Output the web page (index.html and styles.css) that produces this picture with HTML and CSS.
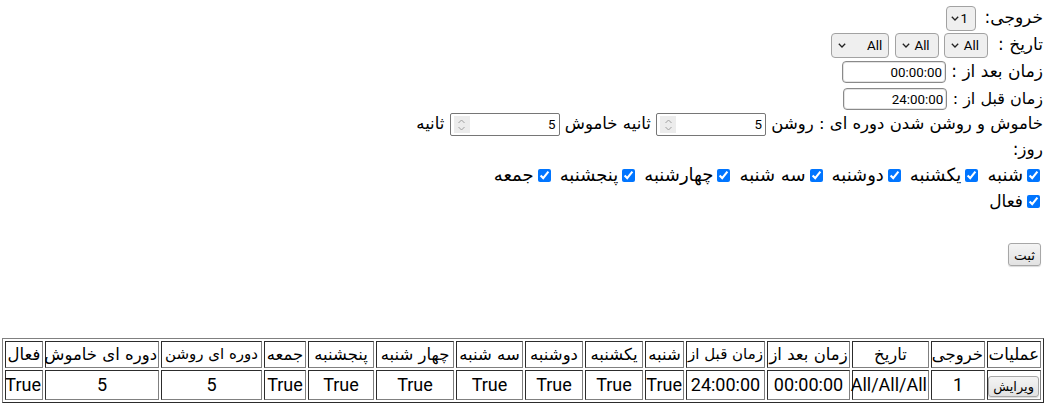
FILE: index.html
```html
<!DOCTYPE html>
<html dir="rtl" lang="fa">
<head>
<meta charset="utf-8">
<link rel="stylesheet" href="styles.css">
</head>
<body>
<div class="page">
<form class="form">
  <div class="row tall">خروجی: <span class="sel-wrap one"><select class="sel sel-1"><option>1</option></select><svg class="chev" width="8" height="5" viewBox="0 0 8 5"><path d="M0.8 0.8 L4 4 L7.2 0.8" fill="none" stroke="#222" stroke-width="1.3"/></svg></span></div>
  <div class="row tall">تاریخ :<span class="sel-wrap first"><select class="sel sel-2"><option>All</option></select><svg class="chev" width="8" height="5" viewBox="0 0 8 5"><path d="M0.8 0.8 L4 4 L7.2 0.8" fill="none" stroke="#222" stroke-width="1.3"/></svg></span> <span class="sel-wrap"><select class="sel sel-2"><option>All</option></select><svg class="chev" width="8" height="5" viewBox="0 0 8 5"><path d="M0.8 0.8 L4 4 L7.2 0.8" fill="none" stroke="#222" stroke-width="1.3"/></svg></span> <span class="sel-wrap"><select class="sel sel-3"><option>All</option></select><svg class="chev" width="8" height="5" viewBox="0 0 8 5"><path d="M0.8 0.8 L4 4 L7.2 0.8" fill="none" stroke="#222" stroke-width="1.3"/></svg></span></div>
  <div class="row tall">زمان بعد از : <input class="txt" type="text" value="00:00:00"></div>
  <div class="row"><span class="lbl-narrow">زمان قبل از :</span> <input class="txt" type="text" value="24:00:00"></div>
  <div class="row short period">خاموش و روشن شدن دوره ای : روشن <span class="num-wrap"><input class="num" type="text" value="5"><span class="spin"><svg width="9" height="14" viewBox="0 0 9 14"><path d="M1.5 5 L4.5 2 L7.5 5" fill="none" stroke="#a0a0a0" stroke-width="1"/><path d="M1.5 9 L4.5 12 L7.5 9" fill="none" stroke="#a0a0a0" stroke-width="1"/></svg></span></span> ثانیه خاموش <span class="num-wrap"><input class="num" type="text" value="5"><span class="spin"><svg width="9" height="14" viewBox="0 0 9 14"><path d="M1.5 5 L4.5 2 L7.5 5" fill="none" stroke="#a0a0a0" stroke-width="1"/><path d="M1.5 9 L4.5 12 L7.5 9" fill="none" stroke="#a0a0a0" stroke-width="1"/></svg></span></span> ثانیه</div>
  <div class="row">روز:</div>
  <div class="row days"><label><input class="chk" type="checkbox" checked>شنبه</label><label><input class="chk" type="checkbox" checked>یکشنبه</label><label><input class="chk" type="checkbox" checked>دوشنبه</label><label><input class="chk" type="checkbox" checked>سه شنبه</label><label><input class="chk" type="checkbox" checked>چهارشنبه</label><label><input class="chk" type="checkbox" checked>پنجشنبه</label><label><input class="chk" type="checkbox" checked>جمعه</label></div>
  <div class="row"><label><input class="chk" type="checkbox" checked>فعال</label></div>
  <div class="submit-row"><button type="button" class="btn">ثبت</button></div>
</form>
<table class="grid" border="1">
  <tr class="head">
    <td class="c1">عملیات</td><td class="c2">خروجی</td><td class="c3">تاریخ</td><td class="c4">زمان بعد از</td><td class="c5 fit">زمان قبل از</td><td class="c6">شنبه</td><td class="c7">یکشنبه</td><td class="c8">دوشنبه</td><td class="c9">سه شنبه</td><td class="c10">چهار شنبه</td><td class="c11">پنجشنبه</td><td class="c12">جمعه</td><td class="c13 fit">دوره ای روشن</td><td class="c14">دوره ای خاموش</td><td class="c15">فعال</td>
  </tr>
  <tr class="data">
    <td><button type="button" class="btn btn-sm">ویرایش</button></td><td>1</td><td>All/All/All</td><td>00:00:00</td><td>24:00:00</td><td>True</td><td>True</td><td>True</td><td>True</td><td>True</td><td>True</td><td>True</td><td>5</td><td>5</td><td>True</td>
  </tr>
</table>
</div>
</body>
</html>
```
FILE: styles.css
```css
body {
  margin: 0;
  font-family: "DejaVu Sans", sans-serif;
  font-size: 17px;
  color: #000;
  background: #fff;
}
.page {
  padding: 4px 15px 0 0;
}
.form {
  margin-right: 1px;
}
.row {
  line-height: 26px;
  height: 26px;
  white-space: nowrap;
}
.row.tall {
  line-height: 27px;
  height: 27px;
}
.row.short {
  line-height: 25px;
  height: 25px;
}
.lbl-narrow {
  font-size: 16px;
}
.period {
  font-size: 16.5px;
}
.sel-wrap {
  position: relative;
  display: inline-block;
  vertical-align: middle;
  line-height: 0;
}
.sel-wrap.one {
  margin-right: 3px;
}
.sel-wrap.first {
  margin-right: 10px;
}
.sel {
  appearance: none;
  -webkit-appearance: none;
  box-sizing: border-box;
  height: 25px;
  margin: 0;
  padding: 0 8px 0 0;
  border: 1px solid #a2a2a2;
  border-radius: 4px;
  background: #efefef;
  font-family: Roboto, sans-serif;
  font-size: 13.33px;
  color: #000;
  direction: rtl;
}
.sel-1 {
  width: 30px;
  padding-right: 7px;
}
.sel-2 {
  width: 44px;
}
.sel-3 {
  width: 58px;
  padding-right: 6px;
}
.chev {
  position: absolute;
  left: 7px;
  top: 10px;
}
.one .chev {
  left: 5px;
}
.txt {
  box-sizing: border-box;
  width: 104px;
  height: 22px;
  margin: 0;
  padding: 0 3px;
  border: 1px solid #8a8a8a;
  border-radius: 4px;
  box-shadow: inset 0 0 0 1px #e4e4e4;
  font-family: Roboto, sans-serif;
  font-size: 13.33px;
  vertical-align: middle;
  direction: ltr;
  text-align: right;
}
.num-wrap {
  display: inline-flex;
  align-items: center;
  box-sizing: border-box;
  width: 110px;
  height: 23px;
  border: 1px solid #767676;
  border-radius: 2px;
  vertical-align: middle;
  background: #fff;
}
.num {
  flex: 1;
  min-width: 0;
  border: 0;
  outline: 0;
  margin: 0;
  padding: 0 3px;
  height: 19px;
  font-family: Roboto, sans-serif;
  font-size: 13.33px;
  background: transparent;
  direction: ltr;
  text-align: right;
}
.spin {
  display: flex;
  align-items: center;
  justify-content: center;
  width: 16px;
  height: 17px;
  margin-left: 3px;
  background: #ececec;
  line-height: 0;
}
.days {
  font-size: 18px;
}
.days label {
  padding-left: 6px;
}
.chk {
  width: 13px;
  height: 13px;
  margin: 0 3px 0 4px;
  vertical-align: -1px;
  accent-color: #0075ff;
}
.submit-row {
  margin-top: 29px;
  line-height: 0;
}
.btn {
  box-sizing: border-box;
  height: 23px;
  padding: 0 5px;
  margin: 0;
  border: 1px solid #a7a7a7;
  border-radius: 3px;
  background: linear-gradient(#f4f4f4, #e2e2e2);
  box-shadow: 0 1px 1px rgba(0,0,0,0.15);
  font-family: "DejaVu Sans", sans-serif;
  font-size: 13.5px;
  color: #000;
}
.submit-row .btn {
  margin-right: 2px;
}
.grid {
  margin-top: 72px;
  white-space: nowrap;
  text-align: center;
  table-layout: fixed;
  width: 1041px;
}
.grid td {
  padding: 1px;
  box-sizing: border-box;
  overflow: visible;
}
.head td {
  font-size: 16.5px;
  line-height: 23px;
}
.head td.fit {
  font-size: 15px;
}
.data td {
  font-family: Roboto, sans-serif;
  font-size: 18px;
  line-height: 26px;
}
.c1 { width: 54px; }
.c2 { width: 54px; }
.c3 { width: 77px; }
.c4 { width: 83px; }
.c5 { width: 79px; }
.c6 { width: 39px; }
.c7 { width: 58px; }
.c8 { width: 58px; }
.c9 { width: 67px; }
.c10 { width: 78px; }
.c11 { width: 66px; }
.c12 { width: 42px; }
.c13 { width: 101px; }
.c14 { width: 114px; }
.c15 { width: 38px; }
.btn-sm {
  height: 21px;
  padding: 0 4px;
  font-size: 13px;
  vertical-align: middle;
}
```
